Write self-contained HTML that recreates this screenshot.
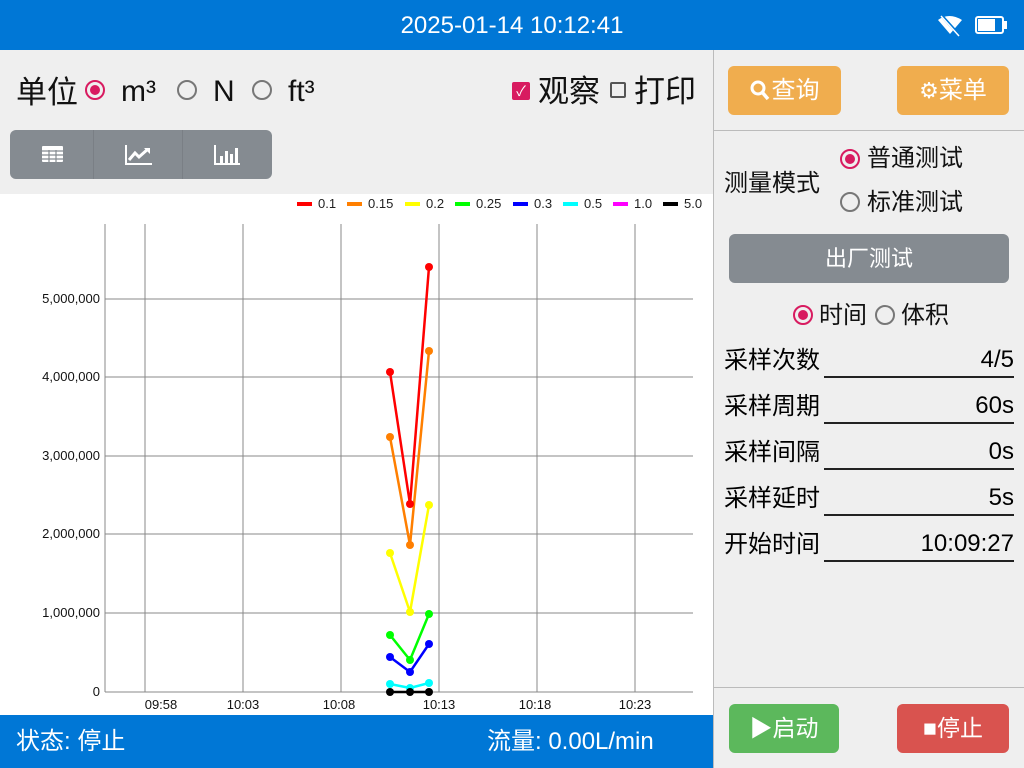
<!DOCTYPE html>
<html><head><meta charset="utf-8"><style>
*{margin:0;padding:0;box-sizing:border-box}
body{width:1024px;height:768px;overflow:hidden;background:#efefef;font-family:"Liberation Sans","Noto Sans CJK SC",sans-serif;position:relative}
.abs{position:absolute}
.top{left:0;top:0;width:1024px;height:50px;background:#0077d6;color:#fff;font-size:24px;text-align:center;line-height:52px}
.rad{display:inline-block;width:20px;height:20px;border-radius:50%;border:2px solid #777;position:absolute}
.rad.on{border-color:#d81b60}
.rad.on::after{content:"";position:absolute;left:3px;top:3px;width:10px;height:10px;border-radius:50%;background:#d81b60}
.t{position:absolute;white-space:nowrap;color:#111;line-height:1}
.btn{position:absolute;border-radius:6px;color:#fff;text-align:center}
.row{position:absolute;left:724px;width:290px;height:40px;font-size:24px}
.row .v{position:absolute;left:100px;right:0;bottom:2px;border-bottom:2px solid #222;text-align:right;height:36px;line-height:36px}
</style></head><body>
<div class="abs top">2025-01-14 10:12:41</div>
<svg class="abs" style="left:936px;top:14px" width="30" height="24" viewBox="0 0 30 24"><path d="M2 6 Q13 -2 26 6 L14 20 Z" fill="#fff"/><line x1="6" y1="2" x2="24" y2="22" stroke="#0077d6" stroke-width="3"/><line x1="5" y1="2" x2="23" y2="22" stroke="#fff" stroke-width="1.5"/></svg>
<div class="abs" style="left:975px;top:16px;width:29px;height:18px;border:2px solid #fff;border-radius:3px"><div style="position:absolute;left:1px;top:1px;width:17px;height:12px;background:#fff"></div></div>
<div class="abs" style="left:1004px;top:21px;width:3px;height:8px;background:#fff"></div>

<div class="t" style="left:16px;top:77px;font-size:31px">单位</div>
<span class="rad on" style="left:85px;top:80px"></span>
<div class="t" style="left:121px;top:77px;font-size:30px">m³</div>
<span class="rad" style="left:177px;top:80px"></span>
<div class="t" style="left:213px;top:77px;font-size:30px">N</div>
<span class="rad" style="left:252px;top:80px"></span>
<div class="t" style="left:288px;top:77px;font-size:30px">ft³</div>
<div class="abs" style="left:512px;top:82px;width:18px;height:18px;background:#d81b60;border-radius:2px;color:#fff;font-size:14px;line-height:18px;text-align:center">✓</div>
<div class="t" style="left:538px;top:76px;font-size:31px">观察</div>
<div class="abs" style="left:610px;top:82px;width:16px;height:16px;border:2px solid #555;border-radius:2px"></div>
<div class="t" style="left:634px;top:76px;font-size:31px">打印</div>

<div class="abs" style="left:10px;top:130px;width:262px;height:49px;background:#858b91;border-radius:6px"></div>
<div class="abs" style="left:93px;top:130px;width:1px;height:49px;background:#7a7f85"></div>
<div class="abs" style="left:182px;top:130px;width:1px;height:49px;background:#7a7f85"></div>
<svg class="abs" style="left:42px;top:146px" width="22" height="17"><rect x="0" y="0" width="21" height="16" rx="1" fill="#fff"/><g stroke="#858b91" stroke-width="1.2"><line x1="0" y1="5" x2="21" y2="5"/><line x1="0" y1="9" x2="21" y2="9"/><line x1="0" y1="13" x2="21" y2="13"/><line x1="7" y1="4" x2="7" y2="16"/><line x1="14" y1="4" x2="14" y2="16"/></g></svg>
<svg class="abs" style="left:125px;top:144px" width="28" height="22"><path d="M1 1V20H27" stroke="#fff" stroke-width="2" fill="none"/><path d="M4 16L10 9L14 13L23 5" stroke="#fff" stroke-width="3" fill="none"/><path d="M19 4H25V10Z" fill="#fff"/></svg>
<svg class="abs" style="left:214px;top:144px" width="28" height="22"><path d="M1 1V20H26" stroke="#fff" stroke-width="2" fill="none"/><rect x="6" y="12" width="3" height="7" fill="#fff"/><rect x="11" y="7" width="3" height="12" fill="#fff"/><rect x="16" y="10" width="3" height="9" fill="#fff"/><rect x="21" y="4" width="3" height="15" fill="#fff"/></svg>

<svg class="abs" style="left:0;top:194px" width="713" height="521" viewBox="0 194 713 521" font-family="Liberation Sans Narrow,Liberation Sans,sans-serif">
<rect x="0" y="194" width="713" height="521" fill="#fff"/>
<g stroke="#888" stroke-width="1">
<line x1="105" y1="224" x2="105" y2="692"/><line x1="145" y1="224" x2="145" y2="692"/><line x1="243" y1="224" x2="243" y2="692"/><line x1="341" y1="224" x2="341" y2="692"/><line x1="439" y1="224" x2="439" y2="692"/><line x1="537" y1="224" x2="537" y2="692"/><line x1="635" y1="224" x2="635" y2="692"/>
<line x1="105" y1="299" x2="693" y2="299"/><line x1="105" y1="377" x2="693" y2="377"/><line x1="105" y1="456" x2="693" y2="456"/><line x1="105" y1="534" x2="693" y2="534"/><line x1="105" y1="613" x2="693" y2="613"/><line x1="105" y1="692" x2="693" y2="692"/>
</g>
<g font-size="13" fill="#111" text-anchor="end"><text x="100" y="303">5,000,000</text><text x="100" y="381">4,000,000</text><text x="100" y="460">3,000,000</text><text x="100" y="538">2,000,000</text><text x="100" y="617">1,000,000</text><text x="100" y="696">0</text></g>
<g font-size="13" fill="#111" text-anchor="middle"><text x="161" y="709">09:58</text><text x="243" y="709">10:03</text><text x="339" y="709">10:08</text><text x="439" y="709">10:13</text><text x="535" y="709">10:18</text><text x="635" y="709">10:23</text></g>
<g font-size="13" fill="#222" font-family="Liberation Sans,sans-serif">
<rect x="297" y="202" width="15" height="4" fill="#f00"/><text x="318" y="208">0.1</text>
<rect x="347" y="202" width="15" height="4" fill="#ff7f00"/><text x="368" y="208">0.15</text>
<rect x="405" y="202" width="15" height="4" fill="#ff0"/><text x="426" y="208">0.2</text>
<rect x="455" y="202" width="15" height="4" fill="#0f0"/><text x="476" y="208">0.25</text>
<rect x="513" y="202" width="15" height="4" fill="#00f"/><text x="534" y="208">0.3</text>
<rect x="563" y="202" width="15" height="4" fill="#0ff"/><text x="584" y="208">0.5</text>
<rect x="613" y="202" width="15" height="4" fill="#f0f"/><text x="634" y="208">1.0</text>
<rect x="663" y="202" width="15" height="4" fill="#000"/><text x="684" y="208">5.0</text>
</g>
<g stroke-width="2.5" fill="none">
<polyline points="390,372 410,504 429,267" stroke="#f00"/>
<polyline points="390,437 410,545 429,351" stroke="#ff7f00"/>
<polyline points="390,553 410,612 429,505" stroke="#ff0"/>
<polyline points="390,635 410,660 429,614" stroke="#0f0"/>
<polyline points="390,657 410,672 429,644" stroke="#00f"/>
<polyline points="390,684 410,688 429,683" stroke="#0ff"/>
<polyline points="390,692 410,692 429,692" stroke="#000"/>
</g>
<g>
<g fill="#f00"><circle cx="390" cy="372" r="4"/><circle cx="410" cy="504" r="4"/><circle cx="429" cy="267" r="4"/></g>
<g fill="#ff7f00"><circle cx="390" cy="437" r="4"/><circle cx="410" cy="545" r="4"/><circle cx="429" cy="351" r="4"/></g>
<g fill="#ff0"><circle cx="390" cy="553" r="4"/><circle cx="410" cy="612" r="4"/><circle cx="429" cy="505" r="4"/></g>
<g fill="#0f0"><circle cx="390" cy="635" r="4"/><circle cx="410" cy="660" r="4"/><circle cx="429" cy="614" r="4"/></g>
<g fill="#00f"><circle cx="390" cy="657" r="4"/><circle cx="410" cy="672" r="4"/><circle cx="429" cy="644" r="4"/></g>
<g fill="#0ff"><circle cx="390" cy="684" r="4"/><circle cx="410" cy="688" r="4"/><circle cx="429" cy="683" r="4"/></g>
<g fill="#000"><circle cx="390" cy="692" r="4"/><circle cx="410" cy="692" r="4"/><circle cx="429" cy="692" r="4"/></g>
</g>
</svg>

<div class="abs" style="left:0;top:715px;width:713px;height:53px;background:#0077d6"></div>
<div class="t" style="left:16px;top:730px;font-size:24px;color:#fff">状态: 停止</div>
<div class="t" style="left:487px;top:730px;font-size:24px;color:#fff">流量: 0.00L/min</div>

<div class="abs" style="left:713px;top:50px;width:1px;height:718px;background:#bbb"></div>
<div class="abs" style="left:714px;top:130px;width:310px;height:1px;background:#bbb"></div>
<div class="abs" style="left:714px;top:687px;width:310px;height:1px;background:#bbb"></div>

<div class="btn" style="left:728px;top:66px;width:113px;height:49px;background:#f0ad4e;font-size:24px;line-height:49px">
<svg style="vertical-align:-3px" width="22" height="21"><circle cx="8" cy="8" r="6" stroke="#fff" stroke-width="3" fill="none"/><line x1="12" y1="12" x2="18" y2="19" stroke="#fff" stroke-width="3.5"/></svg>查询</div>
<div class="btn" style="left:897px;top:66px;width:112px;height:49px;background:#f0ad4e;font-size:24px;line-height:49px"><span style="font-size:22px">⚙</span>菜单</div>

<div class="t" style="left:724px;top:172px;font-size:24px">测量模式</div>
<span class="rad on" style="left:840px;top:149px"></span>
<div class="t" style="left:867px;top:147px;font-size:24px">普通测试</div>
<span class="rad" style="left:840px;top:192px"></span>
<div class="t" style="left:867px;top:191px;font-size:24px">标准测试</div>

<div class="btn" style="left:729px;top:234px;width:280px;height:49px;background:#858b91;font-size:22px;line-height:49px">出厂测试</div>
<span class="rad on" style="left:793px;top:305px"></span>
<div class="t" style="left:819px;top:304px;font-size:24px">时间</div>
<span class="rad" style="left:875px;top:305px"></span>
<div class="t" style="left:901px;top:304px;font-size:24px">体积</div>

<div class="row" style="top:340px">采样次数<div class="v">4/5</div></div>
<div class="row" style="top:386px">采样周期<div class="v">60s</div></div>
<div class="row" style="top:432px">采样间隔<div class="v">0s</div></div>
<div class="row" style="top:478px">采样延时<div class="v">5s</div></div>
<div class="row" style="top:524px">开始时间<div class="v">10:09:27</div></div>

<div class="btn" style="left:729px;top:704px;width:110px;height:49px;background:#5cb85c;font-size:23px;line-height:49px">▶启动</div>
<div class="btn" style="left:897px;top:704px;width:112px;height:49px;background:#d9534f;font-size:23px;line-height:49px">■停止</div>
</body></html>
